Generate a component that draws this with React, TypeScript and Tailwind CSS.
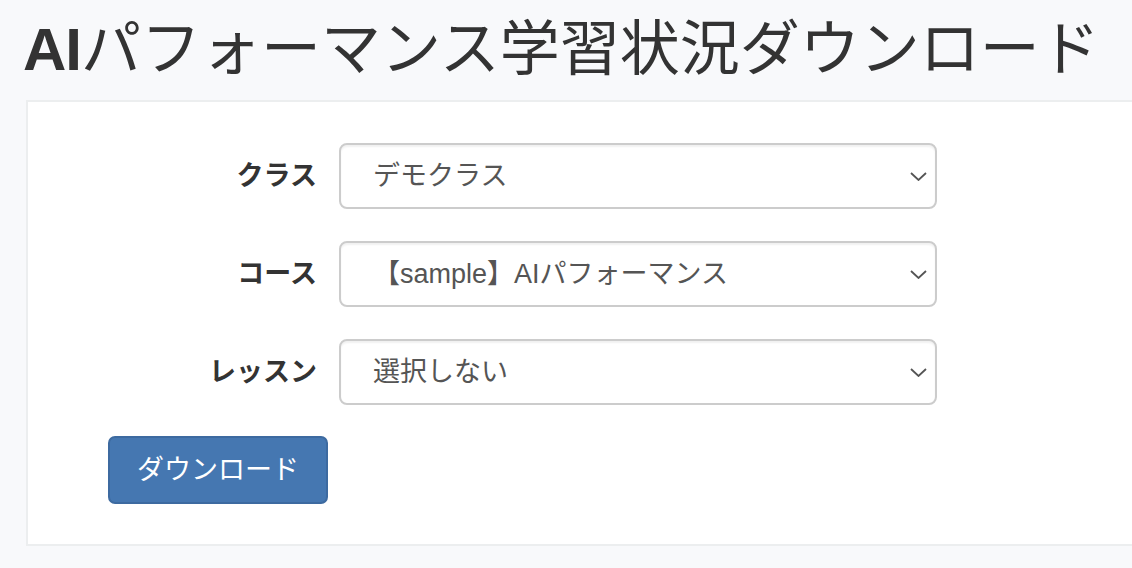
const FONT = { fontFamily: '"Liberation Sans", "Noto Sans CJK JP", sans-serif' };

function Chevron() {
  return (
    <svg width="17" height="9" viewBox="0 0 17 9" fill="none" className="shrink-0">
      <path d="M1 1 L8.5 8 L16 1" stroke="#555555" strokeWidth="1.8" />
    </svg>
  );
}

function SelectRow({ label, value }: { label: string; value: string }) {
  return (
    <div className="flex items-center">
      <div className="w-[209px] shrink-0 text-right text-[27px] font-bold text-[#333333]">{label}</div>
      <div className="ml-[22px] flex h-[66px] w-[598px] items-center justify-between rounded-[8px] border-2 border-[#cccccc] bg-white pl-[32px] pr-[8px] shadow-[inset_0_2px_2px_rgba(0,0,0,0.06)]">
        <span className="text-[27px] text-[#555555]">{value}</span>
        <Chevron />
      </div>
    </div>
  );
}

export default function App() {
  return (
    <div className="h-[568px] w-[1132px] overflow-hidden bg-[#f8f9fb]" style={FONT}>
      <h1 className="pl-[23px] pt-[13px] text-[60px] leading-[74px] font-normal text-[#333333] whitespace-nowrap">
        <span className="font-bold tracking-[-1px]">AI</span>パフォーマンス学習状況ダウンロード
      </h1>
      <div className="ml-[26px] mt-[13px] w-[1120px] border-2 border-[#eceeef] bg-white pb-[40px] pl-[80px] pt-[41px]">
        <div className="flex flex-col gap-[32px]">
          <SelectRow label="クラス" value="デモクラス" />
          <SelectRow label="コース" value="【sample】AIパフォーマンス" />
          <SelectRow label="レッスン" value="選択しない" />
        </div>
        <button
          type="button"
          className="mt-[31px] h-[68px] w-[220px] rounded-[7px] border-2 border-[#3d6aa0] bg-[#4577b1] text-[27px] text-white"
        >
          ダウンロード
        </button>
      </div>
    </div>
  );
}
